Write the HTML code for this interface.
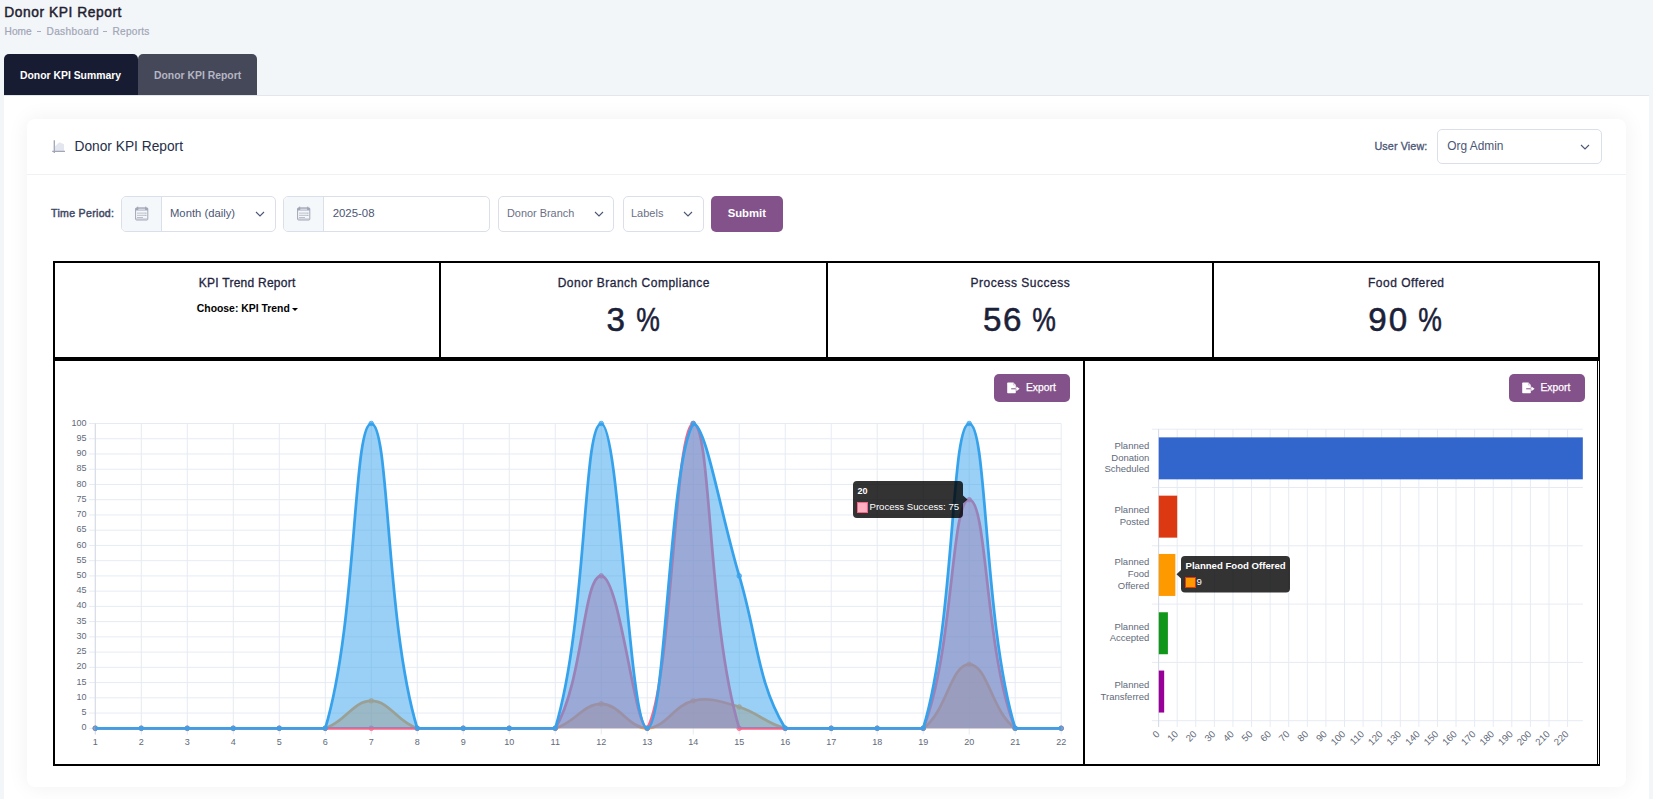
<!DOCTYPE html>
<html><head><meta charset="utf-8"><style>
*{box-sizing:border-box;margin:0;padding:0}
html,body{width:1653px;height:799px;overflow:hidden;background:#f3f6f9;font-family:"Liberation Sans", sans-serif;}
.abs{position:absolute}
.t{position:absolute;white-space:nowrap;line-height:1}
.abs>svg{display:block}
.sb{-webkit-text-stroke:0.3px currentColor}
.num{text-align:center;font-size:33.2px;color:#1b2138;-webkit-text-stroke:0.55px #1b2138}
</style></head><body>
<div class="t" style="left:4.3px;top:5.5px;font-size:13.8px;letter-spacing:0.55px;color:#1e2130;-webkit-text-stroke:0.45px #1e2130">Donor KPI Report</div>
<div class="t" style="left:4.5px;top:27px;font-size:10.1px;letter-spacing:0.1px;color:#a1a5b7;-webkit-text-stroke:0.2px #a1a5b7">Home</div>
<div class="abs" style="left:37px;top:30.5px;width:4px;height:1.6px;background:#a9adbd"></div>
<div class="t" style="left:46.5px;top:27px;font-size:10.1px;letter-spacing:0.35px;color:#a1a5b7;-webkit-text-stroke:0.2px #a1a5b7">Dashboard</div>
<div class="abs" style="left:103px;top:30.5px;width:4px;height:1.6px;background:#a9adbd"></div>
<div class="t" style="left:112.5px;top:27px;font-size:10.1px;letter-spacing:0.25px;color:#a1a5b7;-webkit-text-stroke:0.2px #a1a5b7">Reports</div>

<div class="abs" style="left:4px;top:54px;width:134px;height:42px;background:#181c32;border-radius:5px 5px 0 0"></div>
<div class="t" style="left:20px;top:70.5px;font-size:10.4px;font-weight:bold;color:#fff">Donor KPI Summary</div>
<div class="abs" style="left:138px;top:54px;width:119px;height:42px;background:#454859;border-radius:5px 5px 0 0"></div>
<div class="t" style="left:154px;top:70.5px;font-size:10.4px;font-weight:bold;color:#b5b5c3">Donor KPI Report</div>

<div class="abs" style="left:4px;top:95px;width:1645px;height:704px;background:#fff;border-top:1px solid #e3e6ed"></div>
<div class="abs" style="left:27px;top:119px;width:1599px;height:668px;background:#fff;border-radius:8px;box-shadow:0 0 20px 2px rgba(0,0,0,0.05)"></div>
<div class="abs" style="left:27px;top:174px;width:1599px;height:1px;background:#eff2f5"></div>

<div class="abs" style="left:52px;top:139px;width:14px;height:15px"><svg width="14" height="15" viewBox="0 0 14 15"><path d="M3,12 V7.2 L7.4,3.2 L12,5.2 V12 Z" fill="#e4e6ef"/><path d="M2.3,1.2 V14 M0.2,12.4 H13" fill="none" stroke="#a1a5b7" stroke-width="1.3"/></svg></div>
<div class="t" style="left:74.5px;top:139.5px;font-size:13.75px;color:#252f4a">Donor KPI Report</div>

<div class="t sb" style="left:1374.4px;top:141px;font-size:10.8px;letter-spacing:0.1px;color:#4b5675">User View:</div>
<div class="abs" style="left:1436.5px;top:129px;width:165px;height:34.5px;border:1px solid #dbdfe9;border-radius:5px;background:#fff"></div>
<div class="t" style="left:1447.3px;top:141px;font-size:11.9px;color:#4b5675">Org Admin</div>
<div class="abs" style="left:1580px;top:144px"><svg width="10" height="6" viewBox="0 0 10 6"><path d="M1,1 L5,5 L9,1" fill="none" stroke="#4b5675" stroke-width="1.1"/></svg></div>

<div class="t" style="left:51px;top:207.5px;font-size:10.6px;letter-spacing:0.3px;color:#404864;-webkit-text-stroke:0.45px #404864">Time Period:</div>
<div class="abs" style="left:121px;top:196px;width:155px;height:36px;border:1px solid #dbdfe9;border-radius:5px;background:#fff;overflow:hidden"><div class="abs" style="left:0;top:0;width:40px;height:34px;background:#f5f8fa;border-right:1px solid #dbdfe9"></div></div>
<div class="abs" style="left:134.5px;top:206px"><svg width="14" height="15" viewBox="0 0 14 15"><g fill="none" stroke="#a1a5b7" stroke-width="1"><rect x="0.6" y="1.9" width="12.2" height="12.1" rx="1"/></g><rect x="0.6" y="1.9" width="12.2" height="2.6" fill="#a1a5b7"/><rect x="3.3" y="2.7" width="6.8" height="1" fill="#e9ebf1"/><g fill="#a1a5b7"><rect x="2.2" y="0.6" width="1" height="2"/><rect x="10.2" y="0.6" width="1" height="2"/><rect x="2.3" y="6.6" width="1.4" height="1"/><rect x="4.3" y="6.6" width="1.4" height="1"/><rect x="6.3" y="6.6" width="1.4" height="1"/><rect x="8.3" y="6.6" width="1.4" height="1"/><rect x="10.1" y="6.6" width="1.4" height="1"/><rect x="2.3" y="8.8" width="1.4" height="1"/><rect x="4.3" y="8.8" width="1.4" height="1"/><rect x="6.3" y="8.8" width="1.4" height="1"/><rect x="8.3" y="8.8" width="1.4" height="1"/><rect x="10.1" y="8.8" width="1.4" height="1"/><rect x="2.3" y="11" width="1.4" height="1"/><rect x="4.3" y="11" width="1.4" height="1"/><rect x="6.3" y="11" width="1.4" height="1"/></g><rect x="1.1" y="12.5" width="11.2" height="1" fill="#b5b8c8"/></svg></div>
<div class="t" style="left:170px;top:207.5px;font-size:11.25px;color:#4b5675">Month (daily)</div>
<div class="abs" style="left:254.6px;top:211.2px"><svg width="10" height="6" viewBox="0 0 10 6"><path d="M1,1 L5,5 L9,1" fill="none" stroke="#4b5675" stroke-width="1.1"/></svg></div>

<div class="abs" style="left:283px;top:196px;width:207px;height:36px;border:1px solid #dbdfe9;border-radius:5px;background:#fff;overflow:hidden"><div class="abs" style="left:0;top:0;width:40px;height:34px;background:#f5f8fa;border-right:1px solid #dbdfe9"></div></div>
<div class="abs" style="left:296.5px;top:206px"><svg width="14" height="15" viewBox="0 0 14 15"><g fill="none" stroke="#a1a5b7" stroke-width="1"><rect x="0.6" y="1.9" width="12.2" height="12.1" rx="1"/></g><rect x="0.6" y="1.9" width="12.2" height="2.6" fill="#a1a5b7"/><rect x="3.3" y="2.7" width="6.8" height="1" fill="#e9ebf1"/><g fill="#a1a5b7"><rect x="2.2" y="0.6" width="1" height="2"/><rect x="10.2" y="0.6" width="1" height="2"/><rect x="2.3" y="6.6" width="1.4" height="1"/><rect x="4.3" y="6.6" width="1.4" height="1"/><rect x="6.3" y="6.6" width="1.4" height="1"/><rect x="8.3" y="6.6" width="1.4" height="1"/><rect x="10.1" y="6.6" width="1.4" height="1"/><rect x="2.3" y="8.8" width="1.4" height="1"/><rect x="4.3" y="8.8" width="1.4" height="1"/><rect x="6.3" y="8.8" width="1.4" height="1"/><rect x="8.3" y="8.8" width="1.4" height="1"/><rect x="10.1" y="8.8" width="1.4" height="1"/><rect x="2.3" y="11" width="1.4" height="1"/><rect x="4.3" y="11" width="1.4" height="1"/><rect x="6.3" y="11" width="1.4" height="1"/></g><rect x="1.1" y="12.5" width="11.2" height="1" fill="#b5b8c8"/></svg></div>
<div class="t" style="left:332.7px;top:207.5px;font-size:11.4px;color:#4b5675">2025-08</div>

<div class="abs" style="left:498px;top:196px;width:116px;height:36px;border:1px solid #dbdfe9;border-radius:5px;background:#fff"></div>
<div class="t" style="left:507px;top:207.5px;font-size:10.9px;color:#6b7085">Donor Branch</div>
<div class="abs" style="left:593.5px;top:211.2px"><svg width="10" height="6" viewBox="0 0 10 6"><path d="M1,1 L5,5 L9,1" fill="none" stroke="#4b5675" stroke-width="1.1"/></svg></div>
<div class="abs" style="left:622.5px;top:196px;width:81px;height:36px;border:1px solid #dbdfe9;border-radius:5px;background:#fff"></div>
<div class="t" style="left:631px;top:207.5px;font-size:11px;color:#6b7085">Labels</div>
<div class="abs" style="left:682.8px;top:211.2px"><svg width="10" height="6" viewBox="0 0 10 6"><path d="M1,1 L5,5 L9,1" fill="none" stroke="#4b5675" stroke-width="1.1"/></svg></div>
<div class="abs" style="left:711px;top:196px;width:72px;height:35.5px;background:#84528a;border-radius:5px"></div>
<div class="t" style="left:727.7px;top:207.5px;font-size:11.3px;font-weight:bold;color:#fff">Submit</div>

<!-- KPI grid -->
<div class="abs" style="left:53px;top:261px;width:1547px;height:98px;border:2px solid #000"></div>
<div class="abs" style="left:439px;top:261px;width:2px;height:98px;background:#000"></div>
<div class="abs" style="left:826px;top:261px;width:2px;height:98px;background:#000"></div>
<div class="abs" style="left:1212px;top:261px;width:2px;height:98px;background:#000"></div>
<div class="abs" style="left:53px;top:359px;width:1032px;height:407px;border:2px solid #000"></div>
<div class="abs" style="left:1083px;top:359px;width:517px;height:407px;border:2px solid #000;border-left:none"></div>
<div class="abs" style="left:1597px;top:361px;width:1px;height:403px;background:#000"></div><div class="abs" style="left:1598px;top:361px;width:1px;height:403px;background:#fff"></div>

<div class="t sb" style="left:198.8px;top:277px;font-size:12px;letter-spacing:0.25px;color:#1f2540">KPI Trend Report</div>
<div class="t" style="left:196.8px;top:303.5px;font-size:10.4px;font-weight:bold;color:#000">Choose: KPI Trend</div>
<div class="abs" style="left:291.5px;top:307.5px;width:0;height:0;border-left:3.5px solid transparent;border-right:3.5px solid transparent;border-top:3.5px solid #000"></div>

<div class="t sb" style="left:557.7px;top:277px;font-size:12px;letter-spacing:0.5px;color:#1f2540">Donor Branch Compliance</div>
<div class="t num" style="left:595.8px;width:40px;top:303px">3</div><div class="t num" style="left:628.0px;width:40px;top:303px;transform:scaleX(0.8)">%</div>
<div class="t sb" style="left:970.6px;top:277px;font-size:12px;letter-spacing:0.5px;color:#1f2540">Process Success</div>
<div class="t num" style="left:972.3px;width:40px;top:303px">5</div><div class="t num" style="left:992.3px;width:40px;top:303px">6</div><div class="t num" style="left:1023.5px;width:40px;top:303px;transform:scaleX(0.8)">%</div>
<div class="t sb" style="left:1368px;top:277px;font-size:12px;letter-spacing:0.5px;color:#1f2540">Food Offered</div>
<div class="t num" style="left:1357.6px;width:40px;top:303px">9</div><div class="t num" style="left:1378.0px;width:40px;top:303px">0</div><div class="t num" style="left:1410.1px;width:40px;top:303px;transform:scaleX(0.8)">%</div>

<div class="abs" style="left:994px;top:374px;width:76px;height:28px;background:#84528a;border-radius:5px"></div>
<div class="abs" style="left:1007px;top:381.5px"><svg width="13" height="12" viewBox="0 0 13 12"><path d="M0.2,1.2 Q0.2,0.4 1,0.4 H6.4 L8.8,2.9 V10.4 Q8.8,11.2 8,11.2 H1 Q0.2,11.2 0.2,10.4 Z" fill="#fff"/><path d="M6.4,0.8 V3 H8.5" fill="none" stroke="#c9b5cc" stroke-width="0.7"/><path d="M4.2,6.8 H8.8" stroke="#84528a" stroke-width="1"/><path d="M8.8,6.8 H10" stroke="#fff" stroke-width="1"/><path d="M9.4,4.4 L12.6,6.8 L9.4,9.3 Z" fill="#fff"/></svg></div>
<div class="t" style="left:1026px;top:382.5px;font-size:10.3px;color:#fff;-webkit-text-stroke:0.25px #fff">Export</div>
<div class="abs" style="left:1508.5px;top:374px;width:76px;height:28px;background:#84528a;border-radius:5px"></div>
<div class="abs" style="left:1521.5px;top:381.5px"><svg width="13" height="12" viewBox="0 0 13 12"><path d="M0.2,1.2 Q0.2,0.4 1,0.4 H6.4 L8.8,2.9 V10.4 Q8.8,11.2 8,11.2 H1 Q0.2,11.2 0.2,10.4 Z" fill="#fff"/><path d="M6.4,0.8 V3 H8.5" fill="none" stroke="#c9b5cc" stroke-width="0.7"/><path d="M4.2,6.8 H8.8" stroke="#84528a" stroke-width="1"/><path d="M8.8,6.8 H10" stroke="#fff" stroke-width="1"/><path d="M9.4,4.4 L12.6,6.8 L9.4,9.3 Z" fill="#fff"/></svg></div>
<div class="t" style="left:1540.5px;top:382.5px;font-size:10.3px;color:#fff;-webkit-text-stroke:0.25px #fff">Export</div>

<svg width="1653" height="799" style="position:absolute;left:0;top:0">
<line x1="89" y1="728.30" x2="1061.19" y2="728.30" stroke="#e6ebf3" stroke-width="1"/>
<line x1="89" y1="713.06" x2="1061.19" y2="713.06" stroke="#e6ebf3" stroke-width="1"/>
<line x1="89" y1="697.82" x2="1061.19" y2="697.82" stroke="#e6ebf3" stroke-width="1"/>
<line x1="89" y1="682.58" x2="1061.19" y2="682.58" stroke="#e6ebf3" stroke-width="1"/>
<line x1="89" y1="667.34" x2="1061.19" y2="667.34" stroke="#e6ebf3" stroke-width="1"/>
<line x1="89" y1="652.10" x2="1061.19" y2="652.10" stroke="#e6ebf3" stroke-width="1"/>
<line x1="89" y1="636.86" x2="1061.19" y2="636.86" stroke="#e6ebf3" stroke-width="1"/>
<line x1="89" y1="621.62" x2="1061.19" y2="621.62" stroke="#e6ebf3" stroke-width="1"/>
<line x1="89" y1="606.38" x2="1061.19" y2="606.38" stroke="#e6ebf3" stroke-width="1"/>
<line x1="89" y1="591.14" x2="1061.19" y2="591.14" stroke="#e6ebf3" stroke-width="1"/>
<line x1="89" y1="575.90" x2="1061.19" y2="575.90" stroke="#e6ebf3" stroke-width="1"/>
<line x1="89" y1="560.66" x2="1061.19" y2="560.66" stroke="#e6ebf3" stroke-width="1"/>
<line x1="89" y1="545.42" x2="1061.19" y2="545.42" stroke="#e6ebf3" stroke-width="1"/>
<line x1="89" y1="530.18" x2="1061.19" y2="530.18" stroke="#e6ebf3" stroke-width="1"/>
<line x1="89" y1="514.94" x2="1061.19" y2="514.94" stroke="#e6ebf3" stroke-width="1"/>
<line x1="89" y1="499.70" x2="1061.19" y2="499.70" stroke="#e6ebf3" stroke-width="1"/>
<line x1="89" y1="484.46" x2="1061.19" y2="484.46" stroke="#e6ebf3" stroke-width="1"/>
<line x1="89" y1="469.22" x2="1061.19" y2="469.22" stroke="#e6ebf3" stroke-width="1"/>
<line x1="89" y1="453.98" x2="1061.19" y2="453.98" stroke="#e6ebf3" stroke-width="1"/>
<line x1="89" y1="438.74" x2="1061.19" y2="438.74" stroke="#e6ebf3" stroke-width="1"/>
<line x1="89" y1="423.50" x2="1061.19" y2="423.50" stroke="#e6ebf3" stroke-width="1"/>
<line x1="95.30" y1="423.50" x2="95.30" y2="734.5" stroke="#e6ebf3" stroke-width="1"/>
<line x1="141.29" y1="423.50" x2="141.29" y2="734.5" stroke="#e6ebf3" stroke-width="1"/>
<line x1="187.29" y1="423.50" x2="187.29" y2="734.5" stroke="#e6ebf3" stroke-width="1"/>
<line x1="233.28" y1="423.50" x2="233.28" y2="734.5" stroke="#e6ebf3" stroke-width="1"/>
<line x1="279.28" y1="423.50" x2="279.28" y2="734.5" stroke="#e6ebf3" stroke-width="1"/>
<line x1="325.27" y1="423.50" x2="325.27" y2="734.5" stroke="#e6ebf3" stroke-width="1"/>
<line x1="371.27" y1="423.50" x2="371.27" y2="734.5" stroke="#e6ebf3" stroke-width="1"/>
<line x1="417.26" y1="423.50" x2="417.26" y2="734.5" stroke="#e6ebf3" stroke-width="1"/>
<line x1="463.26" y1="423.50" x2="463.26" y2="734.5" stroke="#e6ebf3" stroke-width="1"/>
<line x1="509.25" y1="423.50" x2="509.25" y2="734.5" stroke="#e6ebf3" stroke-width="1"/>
<line x1="555.25" y1="423.50" x2="555.25" y2="734.5" stroke="#e6ebf3" stroke-width="1"/>
<line x1="601.25" y1="423.50" x2="601.25" y2="734.5" stroke="#e6ebf3" stroke-width="1"/>
<line x1="647.24" y1="423.50" x2="647.24" y2="734.5" stroke="#e6ebf3" stroke-width="1"/>
<line x1="693.23" y1="423.50" x2="693.23" y2="734.5" stroke="#e6ebf3" stroke-width="1"/>
<line x1="739.23" y1="423.50" x2="739.23" y2="734.5" stroke="#e6ebf3" stroke-width="1"/>
<line x1="785.22" y1="423.50" x2="785.22" y2="734.5" stroke="#e6ebf3" stroke-width="1"/>
<line x1="831.22" y1="423.50" x2="831.22" y2="734.5" stroke="#e6ebf3" stroke-width="1"/>
<line x1="877.21" y1="423.50" x2="877.21" y2="734.5" stroke="#e6ebf3" stroke-width="1"/>
<line x1="923.21" y1="423.50" x2="923.21" y2="734.5" stroke="#e6ebf3" stroke-width="1"/>
<line x1="969.20" y1="423.50" x2="969.20" y2="734.5" stroke="#e6ebf3" stroke-width="1"/>
<line x1="1015.20" y1="423.50" x2="1015.20" y2="734.5" stroke="#e6ebf3" stroke-width="1"/>
<line x1="1061.19" y1="423.50" x2="1061.19" y2="734.5" stroke="#e6ebf3" stroke-width="1"/>
<line x1="95.30" y1="423.50" x2="95.30" y2="734.5" stroke="#d5dbe5" stroke-width="1"/>
<text x="86.5" y="730.40" text-anchor="end" font-family="Liberation Sans" font-size="9" fill="#626a7a">0</text>
<text x="86.5" y="715.16" text-anchor="end" font-family="Liberation Sans" font-size="9" fill="#626a7a">5</text>
<text x="86.5" y="699.92" text-anchor="end" font-family="Liberation Sans" font-size="9" fill="#626a7a">10</text>
<text x="86.5" y="684.68" text-anchor="end" font-family="Liberation Sans" font-size="9" fill="#626a7a">15</text>
<text x="86.5" y="669.44" text-anchor="end" font-family="Liberation Sans" font-size="9" fill="#626a7a">20</text>
<text x="86.5" y="654.20" text-anchor="end" font-family="Liberation Sans" font-size="9" fill="#626a7a">25</text>
<text x="86.5" y="638.96" text-anchor="end" font-family="Liberation Sans" font-size="9" fill="#626a7a">30</text>
<text x="86.5" y="623.72" text-anchor="end" font-family="Liberation Sans" font-size="9" fill="#626a7a">35</text>
<text x="86.5" y="608.48" text-anchor="end" font-family="Liberation Sans" font-size="9" fill="#626a7a">40</text>
<text x="86.5" y="593.24" text-anchor="end" font-family="Liberation Sans" font-size="9" fill="#626a7a">45</text>
<text x="86.5" y="578.00" text-anchor="end" font-family="Liberation Sans" font-size="9" fill="#626a7a">50</text>
<text x="86.5" y="562.76" text-anchor="end" font-family="Liberation Sans" font-size="9" fill="#626a7a">55</text>
<text x="86.5" y="547.52" text-anchor="end" font-family="Liberation Sans" font-size="9" fill="#626a7a">60</text>
<text x="86.5" y="532.28" text-anchor="end" font-family="Liberation Sans" font-size="9" fill="#626a7a">65</text>
<text x="86.5" y="517.04" text-anchor="end" font-family="Liberation Sans" font-size="9" fill="#626a7a">70</text>
<text x="86.5" y="501.80" text-anchor="end" font-family="Liberation Sans" font-size="9" fill="#626a7a">75</text>
<text x="86.5" y="486.56" text-anchor="end" font-family="Liberation Sans" font-size="9" fill="#626a7a">80</text>
<text x="86.5" y="471.32" text-anchor="end" font-family="Liberation Sans" font-size="9" fill="#626a7a">85</text>
<text x="86.5" y="456.08" text-anchor="end" font-family="Liberation Sans" font-size="9" fill="#626a7a">90</text>
<text x="86.5" y="440.84" text-anchor="end" font-family="Liberation Sans" font-size="9" fill="#626a7a">95</text>
<text x="86.5" y="425.60" text-anchor="end" font-family="Liberation Sans" font-size="9" fill="#626a7a">100</text>
<text x="95.30" y="745" text-anchor="middle" font-family="Liberation Sans" font-size="9" fill="#626a7a">1</text>
<text x="141.29" y="745" text-anchor="middle" font-family="Liberation Sans" font-size="9" fill="#626a7a">2</text>
<text x="187.29" y="745" text-anchor="middle" font-family="Liberation Sans" font-size="9" fill="#626a7a">3</text>
<text x="233.28" y="745" text-anchor="middle" font-family="Liberation Sans" font-size="9" fill="#626a7a">4</text>
<text x="279.28" y="745" text-anchor="middle" font-family="Liberation Sans" font-size="9" fill="#626a7a">5</text>
<text x="325.27" y="745" text-anchor="middle" font-family="Liberation Sans" font-size="9" fill="#626a7a">6</text>
<text x="371.27" y="745" text-anchor="middle" font-family="Liberation Sans" font-size="9" fill="#626a7a">7</text>
<text x="417.26" y="745" text-anchor="middle" font-family="Liberation Sans" font-size="9" fill="#626a7a">8</text>
<text x="463.26" y="745" text-anchor="middle" font-family="Liberation Sans" font-size="9" fill="#626a7a">9</text>
<text x="509.25" y="745" text-anchor="middle" font-family="Liberation Sans" font-size="9" fill="#626a7a">10</text>
<text x="555.25" y="745" text-anchor="middle" font-family="Liberation Sans" font-size="9" fill="#626a7a">11</text>
<text x="601.25" y="745" text-anchor="middle" font-family="Liberation Sans" font-size="9" fill="#626a7a">12</text>
<text x="647.24" y="745" text-anchor="middle" font-family="Liberation Sans" font-size="9" fill="#626a7a">13</text>
<text x="693.23" y="745" text-anchor="middle" font-family="Liberation Sans" font-size="9" fill="#626a7a">14</text>
<text x="739.23" y="745" text-anchor="middle" font-family="Liberation Sans" font-size="9" fill="#626a7a">15</text>
<text x="785.22" y="745" text-anchor="middle" font-family="Liberation Sans" font-size="9" fill="#626a7a">16</text>
<text x="831.22" y="745" text-anchor="middle" font-family="Liberation Sans" font-size="9" fill="#626a7a">17</text>
<text x="877.21" y="745" text-anchor="middle" font-family="Liberation Sans" font-size="9" fill="#626a7a">18</text>
<text x="923.21" y="745" text-anchor="middle" font-family="Liberation Sans" font-size="9" fill="#626a7a">19</text>
<text x="969.20" y="745" text-anchor="middle" font-family="Liberation Sans" font-size="9" fill="#626a7a">20</text>
<text x="1015.20" y="745" text-anchor="middle" font-family="Liberation Sans" font-size="9" fill="#626a7a">21</text>
<text x="1061.19" y="745" text-anchor="middle" font-family="Liberation Sans" font-size="9" fill="#626a7a">22</text>
<path d="M95.30,728.30 C113.70,728.30 122.90,728.30 141.29,728.30 C159.69,728.30 168.89,728.30 187.29,728.30 C205.69,728.30 214.89,728.30 233.28,728.30 C251.68,728.30 260.88,728.30 279.28,728.30 C297.68,728.30 308.27,728.30 325.27,728.30 C345.07,722.40 352.87,700.87 371.27,700.87 C389.67,700.87 397.47,722.40 417.26,728.30 C434.27,728.30 444.86,728.30 463.26,728.30 C481.66,728.30 490.86,728.30 509.25,728.30 C527.65,728.30 537.99,728.30 555.25,728.30 C574.79,723.12 582.85,703.92 601.25,703.92 C619.64,703.92 629.10,728.30 647.24,728.30 C665.90,727.68 673.52,705.44 693.23,700.87 C710.32,696.91 721.65,701.72 739.23,706.96 C758.44,712.69 765.93,723.83 785.22,728.30 C802.73,728.30 812.82,728.30 831.22,728.30 C849.62,728.30 858.82,728.30 877.21,728.30 C895.61,728.30 909.65,728.30 923.21,728.30 C946.45,712.13 950.81,664.29 969.20,664.29 C987.60,664.29 991.96,712.13 1015.20,728.30 C1028.76,728.30 1042.80,728.30 1061.19,728.30 L1061.19,728.30 L95.30,728.30 Z" fill="rgba(255,159,64,0.5)" stroke="none"/>
<path d="M95.30,728.30 C113.70,728.30 122.90,728.30 141.29,728.30 C159.69,728.30 168.89,728.30 187.29,728.30 C205.69,728.30 214.89,728.30 233.28,728.30 C251.68,728.30 260.88,728.30 279.28,728.30 C297.68,728.30 308.27,728.30 325.27,728.30 C345.07,722.40 352.87,700.87 371.27,700.87 C389.67,700.87 397.47,722.40 417.26,728.30 C434.27,728.30 444.86,728.30 463.26,728.30 C481.66,728.30 490.86,728.30 509.25,728.30 C527.65,728.30 537.99,728.30 555.25,728.30 C574.79,723.12 582.85,703.92 601.25,703.92 C619.64,703.92 629.10,728.30 647.24,728.30 C665.90,727.68 673.52,705.44 693.23,700.87 C710.32,696.91 721.65,701.72 739.23,706.96 C758.44,712.69 765.93,723.83 785.22,728.30 C802.73,728.30 812.82,728.30 831.22,728.30 C849.62,728.30 858.82,728.30 877.21,728.30 C895.61,728.30 909.65,728.30 923.21,728.30 C946.45,712.13 950.81,664.29 969.20,664.29 C987.60,664.29 991.96,712.13 1015.20,728.30 C1028.76,728.30 1042.80,728.30 1061.19,728.30" fill="none" stroke="rgb(255,159,64)" stroke-width="2.75" stroke-linejoin="round"/>
<circle cx="95.30" cy="728.30" r="2.3" fill="rgba(255,159,64,0.5)" stroke="rgb(255,159,64)" stroke-width="0.8"/>
<circle cx="141.29" cy="728.30" r="2.3" fill="rgba(255,159,64,0.5)" stroke="rgb(255,159,64)" stroke-width="0.8"/>
<circle cx="187.29" cy="728.30" r="2.3" fill="rgba(255,159,64,0.5)" stroke="rgb(255,159,64)" stroke-width="0.8"/>
<circle cx="233.28" cy="728.30" r="2.3" fill="rgba(255,159,64,0.5)" stroke="rgb(255,159,64)" stroke-width="0.8"/>
<circle cx="279.28" cy="728.30" r="2.3" fill="rgba(255,159,64,0.5)" stroke="rgb(255,159,64)" stroke-width="0.8"/>
<circle cx="325.27" cy="728.30" r="2.3" fill="rgba(255,159,64,0.5)" stroke="rgb(255,159,64)" stroke-width="0.8"/>
<circle cx="371.27" cy="700.87" r="2.3" fill="rgba(255,159,64,0.5)" stroke="rgb(255,159,64)" stroke-width="0.8"/>
<circle cx="417.26" cy="728.30" r="2.3" fill="rgba(255,159,64,0.5)" stroke="rgb(255,159,64)" stroke-width="0.8"/>
<circle cx="463.26" cy="728.30" r="2.3" fill="rgba(255,159,64,0.5)" stroke="rgb(255,159,64)" stroke-width="0.8"/>
<circle cx="509.25" cy="728.30" r="2.3" fill="rgba(255,159,64,0.5)" stroke="rgb(255,159,64)" stroke-width="0.8"/>
<circle cx="555.25" cy="728.30" r="2.3" fill="rgba(255,159,64,0.5)" stroke="rgb(255,159,64)" stroke-width="0.8"/>
<circle cx="601.25" cy="703.92" r="2.3" fill="rgba(255,159,64,0.5)" stroke="rgb(255,159,64)" stroke-width="0.8"/>
<circle cx="647.24" cy="728.30" r="2.3" fill="rgba(255,159,64,0.5)" stroke="rgb(255,159,64)" stroke-width="0.8"/>
<circle cx="693.23" cy="700.87" r="2.3" fill="rgba(255,159,64,0.5)" stroke="rgb(255,159,64)" stroke-width="0.8"/>
<circle cx="739.23" cy="706.96" r="2.3" fill="rgba(255,159,64,0.5)" stroke="rgb(255,159,64)" stroke-width="0.8"/>
<circle cx="785.22" cy="728.30" r="2.3" fill="rgba(255,159,64,0.5)" stroke="rgb(255,159,64)" stroke-width="0.8"/>
<circle cx="831.22" cy="728.30" r="2.3" fill="rgba(255,159,64,0.5)" stroke="rgb(255,159,64)" stroke-width="0.8"/>
<circle cx="877.21" cy="728.30" r="2.3" fill="rgba(255,159,64,0.5)" stroke="rgb(255,159,64)" stroke-width="0.8"/>
<circle cx="923.21" cy="728.30" r="2.3" fill="rgba(255,159,64,0.5)" stroke="rgb(255,159,64)" stroke-width="0.8"/>
<circle cx="969.20" cy="664.29" r="2.3" fill="rgba(255,159,64,0.5)" stroke="rgb(255,159,64)" stroke-width="0.8"/>
<circle cx="1015.20" cy="728.30" r="2.3" fill="rgba(255,159,64,0.5)" stroke="rgb(255,159,64)" stroke-width="0.8"/>
<circle cx="1061.19" cy="728.30" r="2.3" fill="rgba(255,159,64,0.5)" stroke="rgb(255,159,64)" stroke-width="0.8"/>
<path d="M95.30,728.30 C113.70,728.30 122.90,728.30 141.29,728.30 C159.69,728.30 168.89,728.30 187.29,728.30 C205.69,728.30 214.89,728.30 233.28,728.30 C251.68,728.30 260.88,728.30 279.28,728.30 C297.68,728.30 306.88,728.30 325.27,728.30 C343.67,728.30 352.87,728.30 371.27,728.30 C389.67,728.30 398.87,728.30 417.26,728.30 C435.66,728.30 444.86,728.30 463.26,728.30 C481.66,728.30 490.86,728.30 509.25,728.30 C527.65,728.30 547.00,728.30 555.25,728.30 C583.80,681.01 582.85,575.90 601.25,575.90 C619.64,575.90 634.71,728.30 647.24,728.30 C671.50,688.10 674.84,423.50 693.23,423.50 C711.63,423.50 707.21,622.21 739.23,728.30 C744.01,728.30 766.83,728.30 785.22,728.30 C803.62,728.30 812.82,728.30 831.22,728.30 C849.62,728.30 858.82,728.30 877.21,728.30 C895.61,728.30 917.15,728.30 923.21,728.30 C953.94,651.92 950.81,499.70 969.20,499.70 C987.60,499.70 984.47,651.92 1015.20,728.30 C1021.26,728.30 1042.80,728.30 1061.19,728.30 L1061.19,728.30 L95.30,728.30 Z" fill="rgba(255,99,132,0.5)" stroke="none"/>
<path d="M95.30,728.30 C113.70,728.30 122.90,728.30 141.29,728.30 C159.69,728.30 168.89,728.30 187.29,728.30 C205.69,728.30 214.89,728.30 233.28,728.30 C251.68,728.30 260.88,728.30 279.28,728.30 C297.68,728.30 306.88,728.30 325.27,728.30 C343.67,728.30 352.87,728.30 371.27,728.30 C389.67,728.30 398.87,728.30 417.26,728.30 C435.66,728.30 444.86,728.30 463.26,728.30 C481.66,728.30 490.86,728.30 509.25,728.30 C527.65,728.30 547.00,728.30 555.25,728.30 C583.80,681.01 582.85,575.90 601.25,575.90 C619.64,575.90 634.71,728.30 647.24,728.30 C671.50,688.10 674.84,423.50 693.23,423.50 C711.63,423.50 707.21,622.21 739.23,728.30 C744.01,728.30 766.83,728.30 785.22,728.30 C803.62,728.30 812.82,728.30 831.22,728.30 C849.62,728.30 858.82,728.30 877.21,728.30 C895.61,728.30 917.15,728.30 923.21,728.30 C953.94,651.92 950.81,499.70 969.20,499.70 C987.60,499.70 984.47,651.92 1015.20,728.30 C1021.26,728.30 1042.80,728.30 1061.19,728.30" fill="none" stroke="rgb(255,99,132)" stroke-width="2.75" stroke-linejoin="round"/>
<circle cx="95.30" cy="728.30" r="2.3" fill="rgba(255,99,132,0.5)" stroke="rgb(255,99,132)" stroke-width="0.8"/>
<circle cx="141.29" cy="728.30" r="2.3" fill="rgba(255,99,132,0.5)" stroke="rgb(255,99,132)" stroke-width="0.8"/>
<circle cx="187.29" cy="728.30" r="2.3" fill="rgba(255,99,132,0.5)" stroke="rgb(255,99,132)" stroke-width="0.8"/>
<circle cx="233.28" cy="728.30" r="2.3" fill="rgba(255,99,132,0.5)" stroke="rgb(255,99,132)" stroke-width="0.8"/>
<circle cx="279.28" cy="728.30" r="2.3" fill="rgba(255,99,132,0.5)" stroke="rgb(255,99,132)" stroke-width="0.8"/>
<circle cx="325.27" cy="728.30" r="2.3" fill="rgba(255,99,132,0.5)" stroke="rgb(255,99,132)" stroke-width="0.8"/>
<circle cx="371.27" cy="728.30" r="2.3" fill="rgba(255,99,132,0.5)" stroke="rgb(255,99,132)" stroke-width="0.8"/>
<circle cx="417.26" cy="728.30" r="2.3" fill="rgba(255,99,132,0.5)" stroke="rgb(255,99,132)" stroke-width="0.8"/>
<circle cx="463.26" cy="728.30" r="2.3" fill="rgba(255,99,132,0.5)" stroke="rgb(255,99,132)" stroke-width="0.8"/>
<circle cx="509.25" cy="728.30" r="2.3" fill="rgba(255,99,132,0.5)" stroke="rgb(255,99,132)" stroke-width="0.8"/>
<circle cx="555.25" cy="728.30" r="2.3" fill="rgba(255,99,132,0.5)" stroke="rgb(255,99,132)" stroke-width="0.8"/>
<circle cx="601.25" cy="575.90" r="2.3" fill="rgba(255,99,132,0.5)" stroke="rgb(255,99,132)" stroke-width="0.8"/>
<circle cx="647.24" cy="728.30" r="2.3" fill="rgba(255,99,132,0.5)" stroke="rgb(255,99,132)" stroke-width="0.8"/>
<circle cx="693.23" cy="423.50" r="2.3" fill="rgba(255,99,132,0.5)" stroke="rgb(255,99,132)" stroke-width="0.8"/>
<circle cx="739.23" cy="728.30" r="2.3" fill="rgba(255,99,132,0.5)" stroke="rgb(255,99,132)" stroke-width="0.8"/>
<circle cx="785.22" cy="728.30" r="2.3" fill="rgba(255,99,132,0.5)" stroke="rgb(255,99,132)" stroke-width="0.8"/>
<circle cx="831.22" cy="728.30" r="2.3" fill="rgba(255,99,132,0.5)" stroke="rgb(255,99,132)" stroke-width="0.8"/>
<circle cx="877.21" cy="728.30" r="2.3" fill="rgba(255,99,132,0.5)" stroke="rgb(255,99,132)" stroke-width="0.8"/>
<circle cx="923.21" cy="728.30" r="2.3" fill="rgba(255,99,132,0.5)" stroke="rgb(255,99,132)" stroke-width="0.8"/>
<circle cx="969.20" cy="499.70" r="2.3" fill="rgba(255,99,132,0.5)" stroke="rgb(255,99,132)" stroke-width="0.8"/>
<circle cx="1015.20" cy="728.30" r="2.3" fill="rgba(255,99,132,0.5)" stroke="rgb(255,99,132)" stroke-width="0.8"/>
<circle cx="1061.19" cy="728.30" r="2.3" fill="rgba(255,99,132,0.5)" stroke="rgb(255,99,132)" stroke-width="0.8"/>
<path d="M95.30,728.30 C113.70,728.30 122.90,728.30 141.29,728.30 C159.69,728.30 168.89,728.30 187.29,728.30 C205.69,728.30 214.89,728.30 233.28,728.30 C251.68,728.30 260.88,728.30 279.28,728.30 C297.68,728.30 320.50,728.30 325.27,728.30 C357.29,622.21 352.87,423.50 371.27,423.50 C389.67,423.50 385.25,622.21 417.26,728.30 C422.04,728.30 444.86,728.30 463.26,728.30 C481.66,728.30 490.86,728.30 509.25,728.30 C527.65,728.30 550.47,728.30 555.25,728.30 C587.27,622.21 582.85,423.50 601.25,423.50 C619.64,423.50 628.84,728.30 647.24,728.30 C665.64,728.30 668.97,463.70 693.23,423.50 C705.77,423.50 720.83,514.94 739.23,575.90 C757.63,636.86 756.68,681.01 785.22,728.30 C793.47,728.30 812.82,728.30 831.22,728.30 C849.62,728.30 858.82,728.30 877.21,728.30 C895.61,728.30 918.43,728.30 923.21,728.30 C955.23,622.21 950.81,423.50 969.20,423.50 C987.60,423.50 983.18,622.21 1015.20,728.30 C1019.98,728.30 1042.80,728.30 1061.19,728.30 L1061.19,728.30 L95.30,728.30 Z" fill="rgba(54,162,235,0.5)" stroke="none"/>
<path d="M95.30,728.30 C113.70,728.30 122.90,728.30 141.29,728.30 C159.69,728.30 168.89,728.30 187.29,728.30 C205.69,728.30 214.89,728.30 233.28,728.30 C251.68,728.30 260.88,728.30 279.28,728.30 C297.68,728.30 320.50,728.30 325.27,728.30 C357.29,622.21 352.87,423.50 371.27,423.50 C389.67,423.50 385.25,622.21 417.26,728.30 C422.04,728.30 444.86,728.30 463.26,728.30 C481.66,728.30 490.86,728.30 509.25,728.30 C527.65,728.30 550.47,728.30 555.25,728.30 C587.27,622.21 582.85,423.50 601.25,423.50 C619.64,423.50 628.84,728.30 647.24,728.30 C665.64,728.30 668.97,463.70 693.23,423.50 C705.77,423.50 720.83,514.94 739.23,575.90 C757.63,636.86 756.68,681.01 785.22,728.30 C793.47,728.30 812.82,728.30 831.22,728.30 C849.62,728.30 858.82,728.30 877.21,728.30 C895.61,728.30 918.43,728.30 923.21,728.30 C955.23,622.21 950.81,423.50 969.20,423.50 C987.60,423.50 983.18,622.21 1015.20,728.30 C1019.98,728.30 1042.80,728.30 1061.19,728.30" fill="none" stroke="rgb(54,162,235)" stroke-width="2.75" stroke-linejoin="round"/>
<circle cx="95.30" cy="728.30" r="2.3" fill="rgba(54,162,235,0.5)" stroke="rgb(54,162,235)" stroke-width="0.8"/>
<circle cx="141.29" cy="728.30" r="2.3" fill="rgba(54,162,235,0.5)" stroke="rgb(54,162,235)" stroke-width="0.8"/>
<circle cx="187.29" cy="728.30" r="2.3" fill="rgba(54,162,235,0.5)" stroke="rgb(54,162,235)" stroke-width="0.8"/>
<circle cx="233.28" cy="728.30" r="2.3" fill="rgba(54,162,235,0.5)" stroke="rgb(54,162,235)" stroke-width="0.8"/>
<circle cx="279.28" cy="728.30" r="2.3" fill="rgba(54,162,235,0.5)" stroke="rgb(54,162,235)" stroke-width="0.8"/>
<circle cx="325.27" cy="728.30" r="2.3" fill="rgba(54,162,235,0.5)" stroke="rgb(54,162,235)" stroke-width="0.8"/>
<circle cx="371.27" cy="423.50" r="2.3" fill="rgba(54,162,235,0.5)" stroke="rgb(54,162,235)" stroke-width="0.8"/>
<circle cx="417.26" cy="728.30" r="2.3" fill="rgba(54,162,235,0.5)" stroke="rgb(54,162,235)" stroke-width="0.8"/>
<circle cx="463.26" cy="728.30" r="2.3" fill="rgba(54,162,235,0.5)" stroke="rgb(54,162,235)" stroke-width="0.8"/>
<circle cx="509.25" cy="728.30" r="2.3" fill="rgba(54,162,235,0.5)" stroke="rgb(54,162,235)" stroke-width="0.8"/>
<circle cx="555.25" cy="728.30" r="2.3" fill="rgba(54,162,235,0.5)" stroke="rgb(54,162,235)" stroke-width="0.8"/>
<circle cx="601.25" cy="423.50" r="2.3" fill="rgba(54,162,235,0.5)" stroke="rgb(54,162,235)" stroke-width="0.8"/>
<circle cx="647.24" cy="728.30" r="2.3" fill="rgba(54,162,235,0.5)" stroke="rgb(54,162,235)" stroke-width="0.8"/>
<circle cx="693.23" cy="423.50" r="2.3" fill="rgba(54,162,235,0.5)" stroke="rgb(54,162,235)" stroke-width="0.8"/>
<circle cx="739.23" cy="575.90" r="2.3" fill="rgba(54,162,235,0.5)" stroke="rgb(54,162,235)" stroke-width="0.8"/>
<circle cx="785.22" cy="728.30" r="2.3" fill="rgba(54,162,235,0.5)" stroke="rgb(54,162,235)" stroke-width="0.8"/>
<circle cx="831.22" cy="728.30" r="2.3" fill="rgba(54,162,235,0.5)" stroke="rgb(54,162,235)" stroke-width="0.8"/>
<circle cx="877.21" cy="728.30" r="2.3" fill="rgba(54,162,235,0.5)" stroke="rgb(54,162,235)" stroke-width="0.8"/>
<circle cx="923.21" cy="728.30" r="2.3" fill="rgba(54,162,235,0.5)" stroke="rgb(54,162,235)" stroke-width="0.8"/>
<circle cx="969.20" cy="423.50" r="2.3" fill="rgba(54,162,235,0.5)" stroke="rgb(54,162,235)" stroke-width="0.8"/>
<circle cx="1015.20" cy="728.30" r="2.3" fill="rgba(54,162,235,0.5)" stroke="rgb(54,162,235)" stroke-width="0.8"/>
<circle cx="1061.19" cy="728.30" r="2.3" fill="rgba(54,162,235,0.5)" stroke="rgb(54,162,235)" stroke-width="0.8"/>
<path d="M857,481 H959 Q963,481 963,485 V495.6 L967.5,499.6 L963,503.6 V514 Q963,518 959,518 H857 Q853,518 853,514 V485 Q853,481 857,481 Z" fill="rgba(0,0,0,0.8)"/>
<text x="857.5" y="494" font-family="Liberation Sans" font-size="9" font-weight="bold" fill="#fff">20</text>
<rect x="857.5" y="502.5" width="10" height="10" fill="rgba(255,99,132,0.5)" stroke="rgb(255,99,132)" stroke-width="1"/>
<rect x="858" y="503" width="9" height="9" fill="#ffb1c1"/>
<text x="869.5" y="510" font-family="Liberation Sans" font-size="9.6" fill="#fff">Process Success: 75</text>
<line x1="1152" y1="429.20" x2="1582.9" y2="429.20" stroke="#e6ebf3" stroke-width="1"/>
<line x1="1152" y1="487.50" x2="1582.9" y2="487.50" stroke="#e6ebf3" stroke-width="1"/>
<line x1="1152" y1="545.80" x2="1582.9" y2="545.80" stroke="#e6ebf3" stroke-width="1"/>
<line x1="1152" y1="604.10" x2="1582.9" y2="604.10" stroke="#e6ebf3" stroke-width="1"/>
<line x1="1152" y1="662.40" x2="1582.9" y2="662.40" stroke="#e6ebf3" stroke-width="1"/>
<line x1="1152" y1="720.70" x2="1582.9" y2="720.70" stroke="#e6ebf3" stroke-width="1"/>
<line x1="1158.60" y1="429.20" x2="1158.60" y2="727" stroke="#e6ebf3" stroke-width="1"/>
<line x1="1177.19" y1="429.20" x2="1177.19" y2="727" stroke="#e6ebf3" stroke-width="1"/>
<line x1="1195.78" y1="429.20" x2="1195.78" y2="727" stroke="#e6ebf3" stroke-width="1"/>
<line x1="1214.37" y1="429.20" x2="1214.37" y2="727" stroke="#e6ebf3" stroke-width="1"/>
<line x1="1232.96" y1="429.20" x2="1232.96" y2="727" stroke="#e6ebf3" stroke-width="1"/>
<line x1="1251.55" y1="429.20" x2="1251.55" y2="727" stroke="#e6ebf3" stroke-width="1"/>
<line x1="1270.14" y1="429.20" x2="1270.14" y2="727" stroke="#e6ebf3" stroke-width="1"/>
<line x1="1288.73" y1="429.20" x2="1288.73" y2="727" stroke="#e6ebf3" stroke-width="1"/>
<line x1="1307.32" y1="429.20" x2="1307.32" y2="727" stroke="#e6ebf3" stroke-width="1"/>
<line x1="1325.91" y1="429.20" x2="1325.91" y2="727" stroke="#e6ebf3" stroke-width="1"/>
<line x1="1344.50" y1="429.20" x2="1344.50" y2="727" stroke="#e6ebf3" stroke-width="1"/>
<line x1="1363.09" y1="429.20" x2="1363.09" y2="727" stroke="#e6ebf3" stroke-width="1"/>
<line x1="1381.68" y1="429.20" x2="1381.68" y2="727" stroke="#e6ebf3" stroke-width="1"/>
<line x1="1400.27" y1="429.20" x2="1400.27" y2="727" stroke="#e6ebf3" stroke-width="1"/>
<line x1="1418.86" y1="429.20" x2="1418.86" y2="727" stroke="#e6ebf3" stroke-width="1"/>
<line x1="1437.45" y1="429.20" x2="1437.45" y2="727" stroke="#e6ebf3" stroke-width="1"/>
<line x1="1456.04" y1="429.20" x2="1456.04" y2="727" stroke="#e6ebf3" stroke-width="1"/>
<line x1="1474.63" y1="429.20" x2="1474.63" y2="727" stroke="#e6ebf3" stroke-width="1"/>
<line x1="1493.22" y1="429.20" x2="1493.22" y2="727" stroke="#e6ebf3" stroke-width="1"/>
<line x1="1511.81" y1="429.20" x2="1511.81" y2="727" stroke="#e6ebf3" stroke-width="1"/>
<line x1="1530.40" y1="429.20" x2="1530.40" y2="727" stroke="#e6ebf3" stroke-width="1"/>
<line x1="1548.99" y1="429.20" x2="1548.99" y2="727" stroke="#e6ebf3" stroke-width="1"/>
<line x1="1567.58" y1="429.20" x2="1567.58" y2="727" stroke="#e6ebf3" stroke-width="1"/>
<line x1="1158.60" y1="429.20" x2="1158.60" y2="727" stroke="#d5dbe5" stroke-width="1"/>
<rect x="1158.80" y="437.36" width="424.02" height="41.98" fill="#3366cc"/>
<text x="1149.3" y="448.85" text-anchor="end" font-family="Liberation Sans" font-size="9.5" fill="#626a7a">Planned</text>
<text x="1149.3" y="460.65" text-anchor="end" font-family="Liberation Sans" font-size="9.5" fill="#626a7a">Donation</text>
<text x="1149.3" y="472.45" text-anchor="end" font-family="Liberation Sans" font-size="9.5" fill="#626a7a">Scheduled</text>
<rect x="1158.80" y="495.66" width="18.39" height="41.98" fill="#dc3912"/>
<text x="1149.3" y="513.05" text-anchor="end" font-family="Liberation Sans" font-size="9.5" fill="#626a7a">Planned</text>
<text x="1149.3" y="524.85" text-anchor="end" font-family="Liberation Sans" font-size="9.5" fill="#626a7a">Posted</text>
<rect x="1158.80" y="553.96" width="16.53" height="41.98" fill="#ff9900"/>
<text x="1149.3" y="565.45" text-anchor="end" font-family="Liberation Sans" font-size="9.5" fill="#626a7a">Planned</text>
<text x="1149.3" y="577.25" text-anchor="end" font-family="Liberation Sans" font-size="9.5" fill="#626a7a">Food</text>
<text x="1149.3" y="589.05" text-anchor="end" font-family="Liberation Sans" font-size="9.5" fill="#626a7a">Offered</text>
<rect x="1158.80" y="612.26" width="9.10" height="41.98" fill="#109618"/>
<text x="1149.3" y="629.65" text-anchor="end" font-family="Liberation Sans" font-size="9.5" fill="#626a7a">Planned</text>
<text x="1149.3" y="641.45" text-anchor="end" font-family="Liberation Sans" font-size="9.5" fill="#626a7a">Accepted</text>
<rect x="1158.80" y="670.56" width="5.38" height="41.98" fill="#990099"/>
<text x="1149.3" y="687.95" text-anchor="end" font-family="Liberation Sans" font-size="9.5" fill="#626a7a">Planned</text>
<text x="1149.3" y="699.75" text-anchor="end" font-family="Liberation Sans" font-size="9.5" fill="#626a7a">Transferred</text>
<text transform="translate(1160.20,734.8) rotate(-45)" text-anchor="end" font-family="Liberation Sans" font-size="9.6" fill="#626a7a">0</text>
<text transform="translate(1178.79,734.8) rotate(-45)" text-anchor="end" font-family="Liberation Sans" font-size="9.6" fill="#626a7a">10</text>
<text transform="translate(1197.38,734.8) rotate(-45)" text-anchor="end" font-family="Liberation Sans" font-size="9.6" fill="#626a7a">20</text>
<text transform="translate(1215.97,734.8) rotate(-45)" text-anchor="end" font-family="Liberation Sans" font-size="9.6" fill="#626a7a">30</text>
<text transform="translate(1234.56,734.8) rotate(-45)" text-anchor="end" font-family="Liberation Sans" font-size="9.6" fill="#626a7a">40</text>
<text transform="translate(1253.15,734.8) rotate(-45)" text-anchor="end" font-family="Liberation Sans" font-size="9.6" fill="#626a7a">50</text>
<text transform="translate(1271.74,734.8) rotate(-45)" text-anchor="end" font-family="Liberation Sans" font-size="9.6" fill="#626a7a">60</text>
<text transform="translate(1290.33,734.8) rotate(-45)" text-anchor="end" font-family="Liberation Sans" font-size="9.6" fill="#626a7a">70</text>
<text transform="translate(1308.92,734.8) rotate(-45)" text-anchor="end" font-family="Liberation Sans" font-size="9.6" fill="#626a7a">80</text>
<text transform="translate(1327.51,734.8) rotate(-45)" text-anchor="end" font-family="Liberation Sans" font-size="9.6" fill="#626a7a">90</text>
<text transform="translate(1346.10,734.8) rotate(-45)" text-anchor="end" font-family="Liberation Sans" font-size="9.6" fill="#626a7a">100</text>
<text transform="translate(1364.69,734.8) rotate(-45)" text-anchor="end" font-family="Liberation Sans" font-size="9.6" fill="#626a7a">110</text>
<text transform="translate(1383.28,734.8) rotate(-45)" text-anchor="end" font-family="Liberation Sans" font-size="9.6" fill="#626a7a">120</text>
<text transform="translate(1401.87,734.8) rotate(-45)" text-anchor="end" font-family="Liberation Sans" font-size="9.6" fill="#626a7a">130</text>
<text transform="translate(1420.46,734.8) rotate(-45)" text-anchor="end" font-family="Liberation Sans" font-size="9.6" fill="#626a7a">140</text>
<text transform="translate(1439.05,734.8) rotate(-45)" text-anchor="end" font-family="Liberation Sans" font-size="9.6" fill="#626a7a">150</text>
<text transform="translate(1457.64,734.8) rotate(-45)" text-anchor="end" font-family="Liberation Sans" font-size="9.6" fill="#626a7a">160</text>
<text transform="translate(1476.23,734.8) rotate(-45)" text-anchor="end" font-family="Liberation Sans" font-size="9.6" fill="#626a7a">170</text>
<text transform="translate(1494.82,734.8) rotate(-45)" text-anchor="end" font-family="Liberation Sans" font-size="9.6" fill="#626a7a">180</text>
<text transform="translate(1513.41,734.8) rotate(-45)" text-anchor="end" font-family="Liberation Sans" font-size="9.6" fill="#626a7a">190</text>
<text transform="translate(1532.00,734.8) rotate(-45)" text-anchor="end" font-family="Liberation Sans" font-size="9.6" fill="#626a7a">200</text>
<text transform="translate(1550.59,734.8) rotate(-45)" text-anchor="end" font-family="Liberation Sans" font-size="9.6" fill="#626a7a">210</text>
<text transform="translate(1569.18,734.8) rotate(-45)" text-anchor="end" font-family="Liberation Sans" font-size="9.6" fill="#626a7a">220</text>
<path d="M1185,556 H1286 Q1290,556 1290,560 V588.5 Q1290,592.5 1286,592.5 H1185 Q1181,592.5 1181,588.5 V578.5 L1176.5,574.3 L1181,570 V560 Q1181,556 1185,556 Z" fill="rgba(0,0,0,0.8)"/>
<text x="1185.5" y="569" font-family="Liberation Sans" font-size="9.6" font-weight="bold" fill="#fff">Planned Food Offered</text>
<rect x="1185.5" y="577.5" width="10" height="10" fill="#ff9900" stroke="#dc3912" stroke-width="1"/>
<text x="1196.5" y="585" font-family="Liberation Sans" font-size="9.6" fill="#fff">9</text>
</svg>
</body></html>
